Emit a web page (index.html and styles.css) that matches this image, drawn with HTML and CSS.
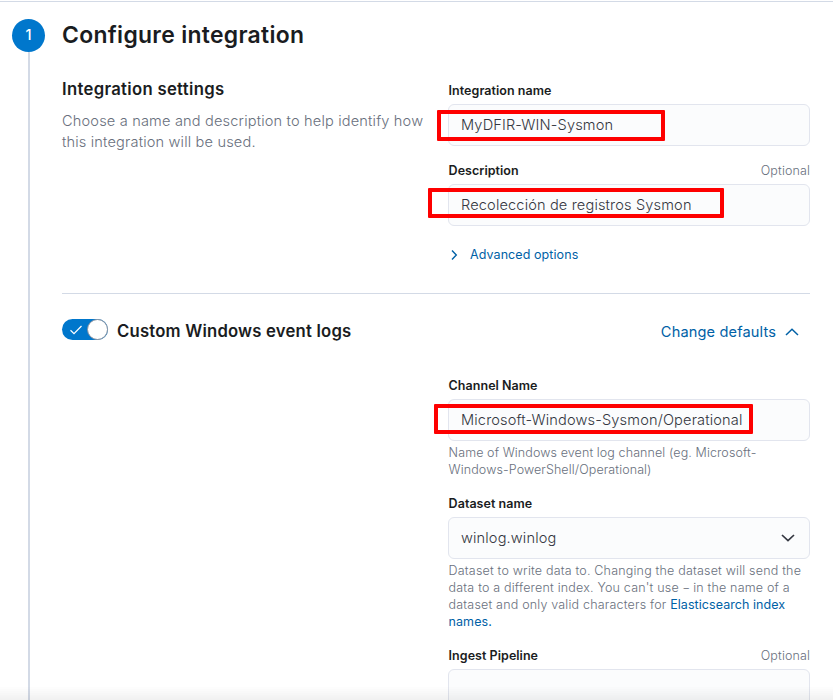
FILE: index.html
```html
<!DOCTYPE html>
<html lang="en">
<head>
<meta charset="utf-8">
<title>Configure integration</title>
<link rel="stylesheet" href="styles.css">
</head>
<body>
<main class="step">
  <div class="rail"><span class="step-number">1</span></div>
  <div class="content">
    <h1 class="title">Configure integration</h1>
    <section class="settings">
      <div class="intro">
        <h2 class="subtitle">Integration settings</h2>
        <p class="lead">Choose a name and description to help identify how<br>this integration will be used.</p>
      </div>
      <div class="fields">
        <div class="field">
          <div class="label-row"><span class="label">Integration name</span></div>
          <div class="input"><span class="value">MyDFIR-WIN-Sysmon</span><i class="mark mark-name"></i></div>
        </div>
        <div class="field">
          <div class="label-row"><span class="label">Description</span><span class="optional">Optional</span></div>
          <div class="input"><span class="value">Recolección de registros Sysmon</span><i class="mark mark-description"></i></div>
        </div>
        <a class="advanced">
          <svg width="12" height="12" viewBox="0 0 12 12"><path d="M4 1.5 8.3 6 4 10.5"/></svg>
          <span>Advanced options</span>
        </a>
      </div>
    </section>
    <section class="log-header">
      <span class="switch">
        <svg class="check" width="14" height="12" viewBox="0 0 14 12"><path d="M1.5 6.3 5 9.7 12.5 2"/></svg>
        <span class="thumb"></span>
      </span>
      <h2 class="subtitle log-title">Custom Windows event logs</h2>
      <a class="defaults"><span>Change defaults</span>
        <svg width="14" height="10" viewBox="0 0 14 10"><path d="M1 8 7 2.3 13 8"/></svg>
      </a>
    </section>
    <section class="fields log-fields">
      <div class="field">
        <div class="label-row"><span class="label">Channel Name</span></div>
        <div class="input"><span class="value">Microsoft-Windows-Sysmon/Operational</span><i class="mark mark-channel"></i></div>
        <p class="help">Name of Windows event log channel (eg. Microsoft-<br>Windows-PowerShell/Operational)</p>
      </div>
      <div class="field">
        <div class="label-row"><span class="label">Dataset name</span></div>
        <div class="input select"><span class="value">winlog.winlog</span>
          <svg width="16" height="12" viewBox="0 0 16 12"><path d="M2 3 8 8.7 14 3"/></svg>
        </div>
        <p class="help help-dataset">Dataset to write data to. Changing the dataset will send the<br>data to a different index. You can't use <span class="dash">-</span> in the name of a<br>dataset and only valid characters for <a>Elasticsearch index<br>names.</a></p>
      </div>
      <div class="field">
        <div class="label-row last-label"><span class="label">Ingest Pipeline</span><span class="optional">Optional</span></div>
        <div class="input"></div>
      </div>
    </section>
  </div>
</main>
</body>
</html>
```
FILE: styles.css
```css
* { box-sizing: border-box; }
body {
  margin: 0;
  height: 700px;
  overflow: hidden;
  background: #fff;
  color: #343741;
  font-family: Inter, "Liberation Sans", sans-serif;
}
/* Soft shade where the scroll area meets the footer */
body::after {
  content: "";
  position: fixed;
  inset: auto 0 0;
  height: 14px;
  background: linear-gradient(rgba(0, 0, 0, 0), rgba(0, 0, 0, 0.055));
}
h1, h2, p { margin: 0; }
svg { fill: none; stroke: currentColor; flex: none; }
.step {
  display: flex;
  height: 700px;
  margin-top: 1px;
  border-top: 1px solid #d3dae6;
  padding: 17px 23px 0 12px;
}
.rail {
  display: flex;
  flex-direction: column;
  align-items: center;
  width: 33px;
  margin-right: 17px;
}
.rail::after {
  content: "";
  flex: 1;
  width: 2px;
  background: #d3dae6;
}
.step-number {
  width: 33px;
  height: 33px;
  border-radius: 50%;
  background: #0077cc;
  color: #fff;
  font-size: 14.6px;
  font-weight: 500;
  line-height: 32px;
  text-align: center;
}
.content { width: 748px; white-space: nowrap; }
.title {
  color: #1a1c21;
  font-size: 22.9px;
  font-weight: 600;
  letter-spacing: 0.31px;
  line-height: 32px;
}
.settings {
  display: flex;
  justify-content: space-between;
  height: 243px;
  padding-top: 28px;
  border-bottom: 1px solid #d3dae6;
}
.subtitle {
  color: #1a1c21;
  font-size: 16.7px;
  font-weight: 600;
  letter-spacing: 0.31px;
  line-height: 20px;
}
.lead {
  margin-top: 12px;
  color: #69707d;
  font-size: 14.6px;
  font-weight: 350;
  letter-spacing: 0.16px;
  line-height: 21px;
}
.fields { width: 362px; padding-top: 2px; }
.field { margin-bottom: 15px; }
.label-row {
  display: flex;
  justify-content: space-between;
  height: 23px;
  padding: 1px 0 0 0.6px;
  font-size: 12.5px;
  line-height: 18px;
}
.last-label { height: 22px; padding-top: 0; }
.label { color: #1a1c21; font-weight: 600; letter-spacing: 0.04px; }
.optional { color: #69707d; font-weight: 350; letter-spacing: 0.13px; }
.input {
  position: relative;
  display: flex;
  align-items: center;
  justify-content: space-between;
  height: 42px;
  padding: 0 13px 0 12px;
  border: 1px solid #e2e5ee;
  border-radius: 6px;
  background: #fbfcfd;
  font-size: 14.6px;
  font-weight: 350;
  letter-spacing: 0.14px;
}
.select svg { stroke-width: 1.7; }
.mark { position: absolute; border: 4px solid #fe0000; border-radius: 1px; }
.mark-name { left: -12px; top: 5px; width: 228px; height: 31px; }
.mark-description { left: -21px; top: 3px; width: 296px; height: 30px; }
.mark-channel { left: -15px; top: 4px; width: 319px; height: 30px; }
.advanced {
  display: flex;
  align-items: center;
  gap: 10px;
  margin-top: 20px;
  color: #0061a6;
  font-size: 12.5px;
  letter-spacing: 0.08px;
  line-height: 18px;
}
.advanced svg { stroke-width: 1.4; }
.log-header { display: flex; align-items: center; height: 72px; }
.switch {
  display: flex;
  align-items: center;
  justify-content: space-between;
  width: 46px;
  height: 21px;
  margin-top: -1px;
  padding-left: 7px;
  border-radius: 11px;
  background: #0077cc;
  color: #fff;
}
.check { stroke-width: 1.2; }
.thumb {
  width: 21px;
  height: 21px;
  border: 1px solid #8a929f;
  border-radius: 50%;
  background: #fff;
}
.log-title { margin: 1px 0 0 9px; letter-spacing: 0.2px; }
.defaults {
  display: flex;
  align-items: center;
  gap: 9px;
  margin: 4px 11px 0 auto;
  color: #0061a6;
  font-size: 14.6px;
  letter-spacing: 0.13px;
}
.defaults svg { stroke-width: 1.5; }
.log-fields { margin-left: auto; padding-top: 10px; }
.help {
  padding: 3px 0 1px 0.6px;
  color: #69707d;
  font-size: 12.5px;
  font-weight: 350;
  letter-spacing: 0.1px;
  line-height: 17.2px;
}
.help-dataset { padding-bottom: 2px; letter-spacing: 0.19px; line-height: 17px; }
.dash { display: inline-block; transform: scaleX(1.4); padding: 0 0.5px; }
.help a { color: #0061a6; font-weight: 400; letter-spacing: 0.06px; }
```
